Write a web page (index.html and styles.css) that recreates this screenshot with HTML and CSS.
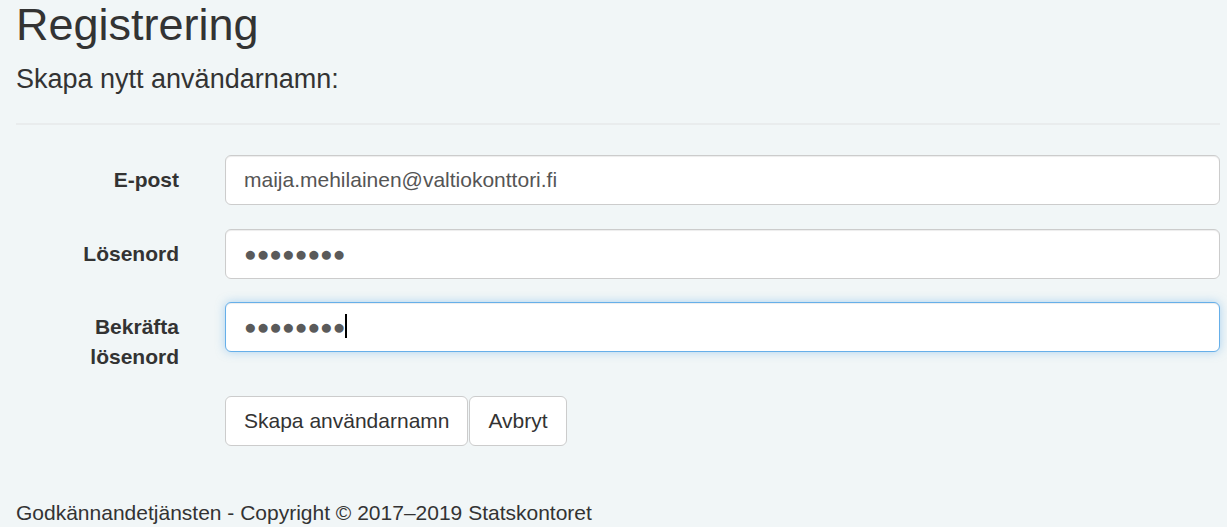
FILE: index.html
```html
<!DOCTYPE html>
<html lang="sv">
<head>
    <meta charset="UTF-8">
    <meta name="viewport" content="width=device-width, initial-scale=1.0">
    <title>Registrering</title>
    <link rel="stylesheet" href="styles.css">
</head>
<body>
    <div class="container">
        <h2 class="title">Registrering</h2>
        <h4 class="subtitle">Skapa nytt användarnamn:</h4>
        <hr>

        <form class="register-form">
            <div class="form-row">
                <label for="email" class="control-label">E-post</label>
                <div class="field">
                    <input type="text" id="email" class="form-control" value="maija.mehilainen@valtiokonttori.fi">
                </div>
            </div>
            <div class="form-row">
                <label for="password" class="control-label">Lösenord</label>
                <div class="field">
                    <input type="text" id="password" class="form-control masked" value="●●●●●●●●">
                </div>
            </div>
            <div class="form-row">
                <label for="confirm" class="control-label">Bekräfta lösenord</label>
                <div class="field">
                    <input type="text" id="confirm" class="form-control masked is-focus" value="●●●●●●●●">
                    <span class="caret"></span>
                </div>
            </div>
            <div class="form-row buttons-row">
                <div></div>
                <div class="buttons">
                    <button type="submit" class="btn">Skapa användarnamn</button>
                    <button type="button" class="btn">Avbryt</button>
                </div>
            </div>
        </form>

        <footer class="footer">Godkännandetjänsten - Copyright © 2017–2019 Statskontoret</footer>
    </div>
</body>
</html>
```

FILE: styles.css
```css
body {
    margin: 0;
    background-color: #f1f6f7;
    font-family: 'Liberation Sans', Arial, sans-serif;
    font-size: 21px;
    line-height: 1.42857;
    color: #333;
}
.container {
    padding: 0 7px 0 16px;
}
.title {
    font-size: 45px;
    font-weight: normal;
    line-height: 1.1;
    margin: 0 0 15px;
}
.subtitle {
    font-size: 27px;
    font-weight: normal;
    line-height: 1.1;
    margin: 15px 0;
}
hr {
    border: 0;
    border-top: 2px solid #e9eced;
    margin: 29px 0 30px;
}
.form-row {
    display: grid;
    grid-template-columns: 163px 1fr;
    column-gap: 46px;
    margin-bottom: 23.5px;
}
.control-label {
    font-weight: bold;
    text-align: right;
    padding-top: 10px;
}
.field {
    position: relative;
}
.form-control {
    display: block;
    width: 100%;
    height: 50px;
    box-sizing: border-box;
    padding: 0 18px;
    font-family: inherit;
    font-size: 21px;
    color: #555;
    background-color: #fff;
    border: 1px solid #ccc;
    border-radius: 6px;
    box-shadow: inset 0 1px 1px rgba(0,0,0,0.075);
    outline: none;
}
.form-control.masked {
    color: #5a5a5a;
}
.form-control.is-focus {
    border-color: #66afe9;
    box-shadow: inset 0 1px 1px rgba(0,0,0,0.075), 0 0 10px rgba(102,175,233,0.5);
}
.caret {
    position: absolute;
    left: 120px;
    top: 12px;
    width: 2px;
    height: 24px;
    background-color: #000;
}
.buttons-row {
    margin-bottom: 0;
}
.buttons {
    display: flex;
    gap: 1px;
}
.btn {
    height: 50px;
    padding: 0 18px;
    font-family: inherit;
    font-size: 21px;
    color: #333;
    background-color: #fff;
    border: 1px solid #ccc;
    border-radius: 6px;
    cursor: pointer;
}
.footer {
    padding-top: 52px;
}
```
